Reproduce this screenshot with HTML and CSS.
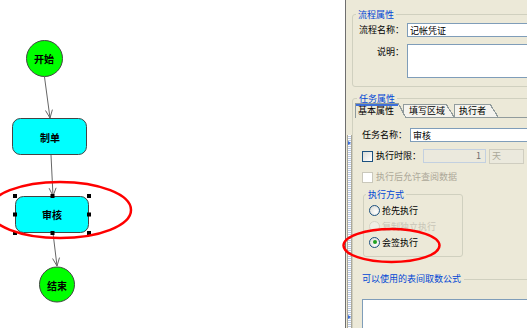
FILE: index.html
```html
<!DOCTYPE html>
<html lang="zh-CN">

<head>
    <meta charset="UTF-8">
    <title>流程设计</title>
    <link rel="stylesheet" href="styles.css">
</head>

<body>
    <div class="workspace">
        <div class="canvas">
            <svg class="flow" width="345" height="328" viewBox="0 0 345 328">
                <g class="edge">
                    <line x1="44.5" y1="77" x2="50" y2="118" />
                    <polyline points="45.5,110.5 50,118 52.4,109.6" />
                    <line x1="51" y1="155" x2="53" y2="196" />
                    <polyline points="49.1,188.2 53,196 56.1,187.8" />
                    <line x1="53" y1="233" x2="57" y2="266" />
                    <polyline points="52.6,258.5 57,266 59.5,257.6" />
                </g>
                <circle class="node-end" cx="44.5" cy="58.5" r="18" />
                <rect class="node-task" x="12.5" y="118.5" width="74" height="36" rx="8" />
                <rect class="node-task" x="15.5" y="196.5" width="73" height="36" rx="8" />
                <circle class="node-end" cx="57" cy="284.5" r="17.5" />
                <text class="node-text" x="44" y="58.5">开始</text>
                <text class="node-text" x="50" y="137">制单</text>
                <text class="node-text" x="52" y="214">审核</text>
                <text class="node-text" x="57" y="285">结束</text>
                <g class="handle">
                    <rect x="13" y="194" width="4" height="4" />
                    <rect x="50.5" y="194" width="4" height="4" />
                    <rect x="87" y="194" width="4" height="4" />
                    <rect x="13" y="212.5" width="4" height="4" />
                    <rect x="87" y="212.5" width="4" height="4" />
                    <rect x="13" y="231" width="4" height="4" />
                    <rect x="50.5" y="231" width="4" height="4" />
                    <rect x="87" y="231" width="4" height="4" />
                </g>
                <ellipse class="mark-ring" cx="60" cy="210" rx="71" ry="28" />
            </svg>
        </div>

        <div class="splitter">
            <div class="grip">
                <span class="grip-arrow"></span>
                <span class="grip-arrow"></span>
            </div>
        </div>

        <div class="props">
            <fieldset class="group">
                <legend>流程属性</legend>
                <div class="form-grid">
                    <label class="field-label">流程名称：</label>
                    <input class="text-input" type="text" value="记帐凭证">
                    <label class="field-label top">说明：</label>
                    <textarea class="text-input memo"></textarea>
                </div>
            </fieldset>

            <fieldset class="group task-group">
                <legend>任务属性</legend>
                <div class="tabs">
                    <div class="tab active"><span class="tab-label">基本属性</span></div>
                    <div class="tab"><span class="tab-label">填写区域</span></div>
                    <div class="tab"><span class="tab-label">执行者</span></div>
                </div>
                <div class="tab-page">
                    <div class="task-row">
                        <label class="field-label">任务名称：</label>
                        <input class="text-input" type="text" value="审核">
                    </div>
                    <div class="check-row">
                        <span class="check"></span>
                        <span class="check-label">执行时限：</span>
                        <span class="num-input">1</span>
                        <span class="unit-select">天</span>
                    </div>
                    <div class="check-row">
                        <span class="check disabled"></span>
                        <span class="muted">执行后允许查阅数据</span>
                    </div>
                    <fieldset class="group mode-group">
                        <legend>执行方式</legend>
                        <div class="radio-row"><span class="radio"></span>抢先执行</div>
                        <div class="radio-row faint"><span class="radio disabled"></span>复制独立执行</div>
                        <div class="radio-row"><span class="radio checked"></span>会签执行</div>
                    </fieldset>
                    <div class="formula-head">可以使用的表间取数公式</div>
                    <textarea class="text-input formula-box"></textarea>
                </div>
            </fieldset>
        </div>
    </div>

    <svg class="overlay" width="527" height="328" viewBox="0 0 527 328">
        <ellipse class="mark-ring" cx="391.5" cy="245.5" rx="48" ry="16.5" />
    </svg>
</body>

</html>
```

FILE: styles.css
```css
* {
    box-sizing: border-box;
}

body {
    margin: 0;
    width: 527px;
    height: 328px;
    overflow: hidden;
    position: relative;
    font-family: "Noto Sans CJK SC", "Noto Sans", sans-serif;
    font-size: 9px;
    color: #000;
}

.workspace {
    display: flex;
    height: 328px;
}

.canvas {
    width: 346px;
    flex: none;
    background: #fff;
    border-right: 1px solid #6f6f6f;
}

.flow {
    display: block;
}

.edge {
    stroke: #666;
    fill: none;
}

.node-end {
    fill: #00ff00;
    stroke: #444;
}

.node-task {
    fill: #00ffff;
    stroke: #444;
}

.node-text {
    font: bold 10px "Noto Sans CJK SC", sans-serif;
    text-anchor: middle;
    dominant-baseline: central;
}

.handle {
    fill: #000;
}

.mark-ring {
    fill: none;
    stroke: #f00;
    stroke-width: 2.5;
}

.overlay {
    position: absolute;
    left: 0;
    top: 0;
    pointer-events: none;
}

.splitter {
    width: 6px;
    flex: none;
    background: #ece9d8;
    padding: 135px 0 0 1px;
}

.grip {
    width: 5px;
    height: 100%;
    border-left: 1px solid #aca899;
    border-right: 1px solid #aca899;
    background: repeating-linear-gradient(to bottom, #fff 0 1px, #b9c8e2 1px 2px);
    display: flex;
    flex-direction: column;
    justify-content: space-between;
    padding: 6px 0 9px;
}

.grip-arrow {
    width: 0;
    height: 0;
    border-left: 3px solid #3a6ed8;
    border-top: 2px solid transparent;
    border-bottom: 2px solid transparent;
}

.props {
    width: 200px;
    flex: none;
    background: #ece9d8;
    padding-top: 9px;
}

.group {
    margin: 0;
    padding: 3px 3px 8px;
    min-width: 0;
    border: 1px solid #d0d0bf;
    border-radius: 3px;
}

.group legend {
    padding: 0 2px;
    line-height: 11px;
    color: #0046d5;
}

.form-grid {
    display: grid;
    grid-template-columns: 48px 1fr;
    column-gap: 3px;
    row-gap: 7px;
    align-items: center;
}

.field-label {
    text-align: right;
    line-height: 12px;
    white-space: nowrap;
}

.field-label.top {
    align-self: start;
    padding-top: 2px;
}

.text-input {
    display: block;
    width: 100%;
    height: 14px;
    margin: 0;
    padding: 0 2px;
    border: 1px solid #7f9db9;
    background: #fff;
    font: inherit;
    line-height: 12px;
    color: #000;
    outline: none;
}

.memo {
    height: 34px;
    resize: none;
}

.task-group {
    margin-top: 6px;
    padding: 0 0 0 2px;
}

.task-group > legend {
    margin-left: 2px;
}

.tabs {
    display: flex;
    align-items: flex-end;
    height: 15px;
    margin-top: -1px;
    border-bottom: 1px solid #919b9c;
}

.tab {
    display: flex;
    height: 13px;
}

.tab + .tab {
    margin-left: -3px;
}

.tab:last-child {
    margin-left: 0;
}

.tab-label {
    padding: 0 1px 0 5px;
    line-height: 12px;
    border-top: 1px solid #919b9c;
    border-left: 1px solid #919b9c;
    background: #f4f3ee;
}

.tab::after {
    content: "";
    width: 8px;
    background: linear-gradient(to top right, #f4f3ee calc(50% - 0.6px), #919b9c calc(50% - 0.6px) calc(50% + 0.6px), transparent calc(50% + 0.6px));
}

.tab:last-child .tab-label {
    padding: 0 4px 0 4px;
}

.tab.active {
    position: relative;
    z-index: 1;
    height: 15px;
    margin-bottom: -1px;
}

.tab.active .tab-label {
    padding: 1px 4px 0 2px;
    background: #ece9d8;
    box-shadow: inset 0 2px #3d6fd9;
}

.tab.active::after {
    background: linear-gradient(to top right, #ece9d8 calc(50% - 0.6px), #919b9c calc(50% - 0.6px) calc(50% + 0.6px), transparent calc(50% + 0.6px));
}

.tab-page {
    padding: 10px 0 0 7px;
}

.task-row {
    display: grid;
    grid-template-columns: 45px 1fr;
    column-gap: 3px;
    align-items: center;
}

.check-row {
    display: flex;
    align-items: center;
    height: 14px;
    margin-top: 7px;
    line-height: 12px;
}

.check {
    flex: none;
    width: 11px;
    height: 11px;
    margin-right: 3px;
    border: 1px solid #1c5180;
    background: linear-gradient(135deg, #dcdcd7, #fff);
}

.check.disabled {
    border-color: #cac8bb;
    background: #fff;
}

.check-label {
    width: 45px;
    flex: none;
    white-space: nowrap;
}

.num-input {
    flex: none;
    width: 63px;
    height: 14px;
    margin-left: 2px;
    padding-right: 4px;
    border: 1px solid #c3d0e0;
    background: #ebe9dd;
    text-align: right;
    color: #6d6d6d;
}

.unit-select {
    flex: none;
    width: 35px;
    height: 15px;
    margin-left: 3px;
    padding-left: 2px;
    border: 1px solid #cfcdc0;
    background: #ebe9dd;
    color: #aca899;
}

.muted {
    color: #aca899;
}

.mode-group {
    width: 100px;
    margin: 5px 0 0 1px;
    padding: 2px 2px 6px;
}

.radio-row {
    display: flex;
    align-items: center;
    height: 16px;
    padding-left: 3px;
}

.radio-row.faint {
    color: #c8c5b7;
}

.radio {
    flex: none;
    display: flex;
    align-items: center;
    justify-content: center;
    width: 11px;
    height: 11px;
    margin-right: 2px;
    border: 1px solid #1c5180;
    border-radius: 50%;
    background: radial-gradient(circle at 65% 65%, #fff, #d6d6cf);
}

.radio.disabled {
    border-color: #d6d3c6;
    background: #f0eee4;
}

.radio.checked::after {
    content: "";
    width: 4px;
    height: 4px;
    border-radius: 50%;
    background: #21a121;
}

.formula-head {
    display: flex;
    align-items: center;
    margin-top: 16px;
    line-height: 12px;
    color: #0046d5;
    white-space: nowrap;
}

.formula-head::after {
    content: "";
    flex: 1;
    margin-left: 3px;
    border-top: 1px solid #d0d0bf;
}

.formula-box {
    height: 60px;
    margin-top: 14px;
    resize: none;
}
```
